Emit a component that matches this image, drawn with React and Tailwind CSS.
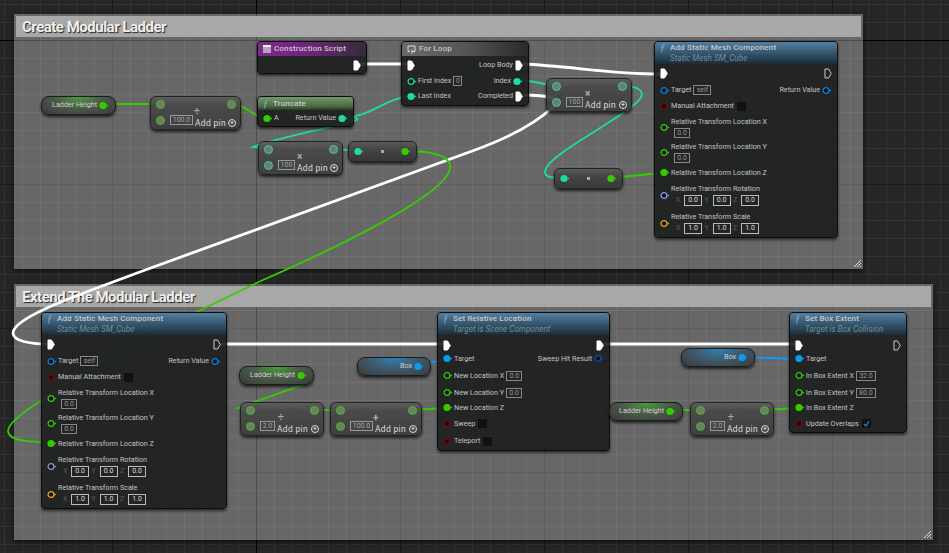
const GREEN = "#35cc00";
const TEAL = "#1ddba8";
const BLUE = "#0a9cf0";
const OBJ = "#0a7fd8";
const RED = "#7d0505";
const STRUCT = "#8898e0";
const AMBER = "#e0a814";

/* GRID */

function Grid() {
  const minorX = [];
  const minorY = [];
  for (let x = 4; x < 949; x += 18) minorX.push(x);
  for (let y = 4; y < 553; y += 18) minorY.push(y);
  return (
    <svg className="absolute inset-0" width="949" height="553">
      {minorX.map(x => (
        <line key={x} x1={x + 0.5} x2={x + 0.5} y1="0" y2="553" stroke="#333333" />
      ))}
      {minorY.map(y => (
        <line key={y} y1={y + 0.5} y2={y + 0.5} x1="0" x2="949" stroke="#333333" />
      ))}
      {[112, 400, 544, 688, 832].map(x => (
        <line key={x} x1={x + 0.5} x2={x + 0.5} y1="0" y2="553" stroke="#1a1a1a" />
      ))}
      {[184, 328, 472].map(y => (
        <line key={y} y1={y + 0.5} y2={y + 0.5} x1="0" x2="949" stroke="#1a1a1a" />
      ))}
      <line x1="256.5" x2="256.5" y1="0" y2="553" stroke="#000000" />
      <line y1="40.5" y2="40.5" x1="0" x2="949" stroke="#000000" />
    </svg>
  );
}

/* WIRES */

function Wires() {
  return (
    <svg className="absolute inset-0" width="949" height="553" fill="none" strokeLinecap="round">
      <g stroke="#ffffff" strokeWidth="2.8">
        <path d="M358 64 L410 64" />
        <path d="M522 64 C570 66 610 74 660 74" />
        <path d="M522 95 C548 95 564 98 553 107 C535 124 505 139 475 150 L137 273 C90 291 13 316 13 333 C13 341 30 344 47 344" />
        <path d="M222 344 L442 344" />
        <path d="M600 344 L796 344" />
      </g>
      <g stroke={GREEN} strokeWidth="1.8">
        <path d="M103 104 L160 104" />
        <path d="M232 104 C245 105 250 113 262 118" />
        <path d="M405 151 C430 151 450 155 450 167 C450 195 320 255 263 280 C200 310 110 352 42 400 C20 414 8 424 8 431 C8 440 25 442 47 442" />
        <path d="M612 178 L660 173" />
        <path d="M300 374 C312 374 316 378 310 382 L238 408 L249 410" />
        <path d="M314 410 L340 410" />
        <path d="M412 410 L447 408" />
        <path d="M669 410 L700 410" />
        <path d="M764 410 L798 408" />
      </g>
      <g stroke={TEAL} strokeWidth="1.8">
        <path d="M342 117 C370 119 385 97 412 96" />
        <path d="M342 117 C362 117 360 120 350 122 C320 130 270 140 253 147 L268 149" />
        <path d="M334 149 L358 151" />
        <path d="M518 79 L556 86" />
        <path d="M622 86 C640 86 645 92 640 99 C625 118 545 155 545 172 C545 178 555 178 564 178" />
      </g>
      <g stroke={BLUE} strokeWidth="1.8">
        <path d="M415 366 L447 359" />
        <path d="M741 357 L798 359" />
      </g>
    </svg>
  );
}

/* COMMENT */

function Comment({ className, title }) {
  return (
    <div className={`absolute bg-white/30 shadow-[0_2px_6px_rgba(0,0,0,0.6)] ${className}`}>
      <div className="mx-[2px] mt-[2px] h-[21px] bg-[#a8a8a8] pl-[6px] font-['Roboto'] text-[15px] font-bold leading-[22px] tracking-[-0.5px] text-[#efefef] [text-shadow:1px_1px_1px_#222]">
        {title}
      </div>
      <svg className="absolute bottom-[1px] right-[1px]" width="9" height="9" stroke="#dddddd">
        <path d="M1 8 L8 1 M4 8 L8 4 M7 8 L8 7" />
      </svg>
    </div>
  );
}

/* PINS */

function Pin({ color, filled }) {
  return (
    <svg className="shrink-0" width="10" height="9" viewBox="0 0 10 9">
      <circle cx="4" cy="4.5" r={filled ? 3.6 : 2.9} fill={filled ? color : "#111111"} stroke={color} strokeWidth={filled ? 0 : 1.3} />
      <path d="M7.5 3.2 L9.5 4.5 L7.5 5.8 Z" fill={color} />
    </svg>
  );
}

function Exec({ filled = true }) {
  return (
    <svg className="shrink-0" width="8" height="11" viewBox="0 0 8 11">
      <path d="M1 1 L4.5 1 L7.3 5.5 L4.5 10 L1 10 Z" fill={filled ? "#ffffff" : "none"} stroke={filled ? "#ffffff" : "#cccccc"} />
    </svg>
  );
}

function RingPin({ color }) {
  return <span className="block h-[9px] w-[9px] shrink-0 rounded-full border-[1.5px] bg-[#777777]" style={{ borderColor: color }} />;
}

/* SMALL PARTS */

function Val({ children, w }) {
  return (
    <span className={`ml-[1px] inline-block h-[10px] border border-[#888888] text-center text-[7px] leading-[8px] text-[#999999] ${w}`}>
      {children}
    </span>
  );
}

function Check({ on }) {
  return (
    <span className="ml-[2px] flex h-[9px] w-[9px] items-center justify-center bg-[#111111]">
      {on && (
        <svg width="7" height="7" viewBox="0 0 7 7" fill="none" stroke="#1e7fe0" strokeWidth="1.4">
          <path d="M1 4 L3 6 L6 1" />
        </svg>
      )}
    </span>
  );
}

function Vec({ values }) {
  return (
    <div className="mt-[1px] flex items-center pl-[5px] text-[7px] text-[#5c5c5c]">
      {["X", "Y", "Z"].map((axis, i) => (
        <span key={axis} className="flex w-[28.5px] items-center">
          <span className="w-[8px]">{axis}</span>
          <span className="inline-block h-[11px] w-[18px] border border-[#bbbbbb] text-center leading-[9px] text-[#dddddd]">{values[i]}</span>
        </span>
      ))}
    </div>
  );
}

/* ROW */

function Row({ h, pin, filled, children, right, rightPin, rightFilled, exec, execOut, execOutFilled = true }) {
  return (
    <div className={`flex items-center justify-between ${h}`}>
      <div className="flex items-center gap-[1px]">
        {exec && <Exec />}
        {pin && <Pin color={pin} filled={filled} />}
        {children}
      </div>
      {right && (
        <div className="flex items-center gap-[1px]">
          <span className="pr-[1px]">{right}</span>
          {rightPin && <Pin color={rightPin} filled={rightFilled} />}
          {execOut && <Exec filled={execOutFilled} />}
        </div>
      )}
      {!right && execOut && <Exec filled={execOutFilled} />}
    </div>
  );
}

/* FUNCTION NODE */

function Node({ className, icon = "f", title, sub, header, headerH, children, inner }) {
  return (
    <div className={`absolute overflow-hidden rounded-[4px] border border-[#0c0c0c] bg-[#1c1e1d]/90 font-['Roboto'] text-[7.2px] text-[#c4c4c4] shadow-[0_2px_3px_rgba(0,0,0,0.6)] ${className}`}>
      <div className={`flex flex-col justify-center pl-[5px] ${header} ${headerH}`}>
        <div className="flex items-center gap-[3px]">
          {icon === "f" && <span className="w-[7px] font-['Liberation_Serif'] text-[10px] italic leading-[10px] text-[#8fb4cd]">ƒ</span>}
          {icon === "script" && <span className="h-[8px] w-[8px] bg-[#b9a4bf] shadow-[inset_0_2px_0_#eee]" />}
          {icon === "loop" && (
            <svg width="9" height="9" viewBox="0 0 9 9" fill="none" stroke="#dddddd">
              <path d="M3 6.5 H1 V1 H8 V6.5 H5 M5 4.5 L5 8.5" />
            </svg>
          )}
          <span className="text-[8px] font-medium leading-[10px] tracking-[0.15px] text-[#c8c8c8]">{title}</span>
        </div>
        {sub && <span className="pl-[10px] text-[8.2px] italic leading-[10px] text-[#6f8d9c]">{sub}</span>}
      </div>
      <div className={inner}>{children}</div>
    </div>
  );
}

/* COMPACT NODES */

function MathNode({ className, symbol, symbolPos, value, color, boxW }) {
  return (
    <div className={`absolute rounded-[6px] border border-[#222222] bg-[linear-gradient(180deg,rgba(92,92,92,0.92)_0%,rgba(72,72,72,0.92)_25%,rgba(60,60,60,0.92)_100%)] pl-[5px] pr-[4px] pt-[3px] font-['Roboto'] shadow-[0_2px_3px_rgba(0,0,0,0.7)] ${className}`}>
      <div className="flex items-center justify-between">
        <RingPin color={color} />
        <RingPin color={color} />
      </div>
      <div className="mt-[6px] flex h-[10px] items-center">
        <RingPin color={color} />
        <span className={`ml-[5px] inline-block h-[10px] shrink-0 border border-[#999999] text-center text-[7px] leading-[8px] text-[#a5a5a5] ${boxW}`}>{value}</span>
        <span className="ml-[2px] mt-[6px] flex-1 whitespace-nowrap text-[8.5px] leading-[8px] tracking-[0.3px] text-[#dddddd]">Add pin</span>
        <span className="mt-[6px] flex h-[8px] w-[8px] shrink-0 items-center justify-center rounded-full border border-[#dddddd] text-[7px] leading-[6px] text-white">+</span>
      </div>
      <span className={`absolute top-[10px] text-[10px] font-bold leading-[10px] text-[#b0b0b0] ${symbolPos}`}>{symbol}</span>
    </div>
  );
}

function VarNode({ className, label, color, glow }) {
  return (
    <div className={`absolute flex items-center justify-end gap-[1px] rounded-[8px] border border-[#1c1c1c] pr-[6px] font-['Roboto'] text-[7.2px] text-[#d0d0d0] shadow-[0_2px_3px_rgba(0,0,0,0.7)] ${glow} ${className}`}>
      <span className="pr-[1px]">{label}</span>
      <Pin color={color} filled />
    </div>
  );
}

function DotNode({ className, from, to }) {
  return (
    <div className={`absolute flex items-center justify-between rounded-[6px] border border-[#222222] bg-[linear-gradient(180deg,#5a5a5a_0%,#444444_40%,#383838_100%)] px-[5px] shadow-[0_2px_3px_rgba(0,0,0,0.7)] ${className}`}>
      <Pin color={from} filled />
      <span className="h-[3px] w-[3px] bg-[#aaaaaa]" />
      <Pin color={to} filled />
    </div>
  );
}

const BLUE_HEAD = "bg-[linear-gradient(180deg,rgba(84,132,168,0.95)_0%,rgba(42,72,92,0.95)_70%,rgba(28,44,54,0.95)_100%)]";
const GREEN_GLOW = "bg-[radial-gradient(ellipse_at_50%_0%,#4a9a3a_0%,#4a5c48_45%,#3a3a3a_100%)]";
const BLUE_GLOW = "bg-[radial-gradient(ellipse_at_50%_0%,#2c80b8_0%,#3f5868_50%,#3a3a3a_100%)]";

function MeshNode({ className }) {
  return (
    <Node className={className} title="Add Static Mesh Component" sub="Static Mesh SM_Cube" header={BLUE_HEAD} headerH="h-[22px]" inner="px-[5px]">
      <Row h="h-[19px]" exec execOut execOutFilled={false} />
      <Row h="h-[15px]" pin={OBJ} right="Return Value" rightPin={OBJ}>
        Target <Val w="w-[18px]">self</Val>
      </Row>
      <Row h="h-[17px]" pin={RED}>
        Manual Attachment <Check />
      </Row>
      <Row h="h-[25px]" pin={GREEN}>
        <div className="flex flex-col items-start">
          <span className="leading-[10px]">Relative Transform Location X</span>
          <span className="ml-[2px] mt-[1px] flex"><Val w="w-[16px]">0.0</Val></span>
        </div>
      </Row>
      <Row h="h-[25px]" pin={GREEN}>
        <div className="flex flex-col items-start">
          <span className="leading-[10px]">Relative Transform Location Y</span>
          <span className="ml-[2px] mt-[1px] flex"><Val w="w-[16px]">0.0</Val></span>
        </div>
      </Row>
      <Row h="h-[16px]" pin={GREEN} filled>
        Relative Transform Location Z
      </Row>
      <Row h="h-[28px]" pin={STRUCT}>
        <div>
          <span className="block leading-[10px]">Relative Transform Rotation</span>
          <Vec values={["0.0", "0.0", "0.0"]} />
        </div>
      </Row>
      <Row h="h-[28px]" pin={AMBER}>
        <div>
          <span className="block leading-[10px]">Relative Transform Scale</span>
          <Vec values={["1.0", "1.0", "1.0"]} />
        </div>
      </Row>
    </Node>
  );
}

export default function App() {
  return (
    <div className="relative h-[553px] w-[949px] overflow-hidden bg-[#262626]">
      <Grid />

      <Comment className="left-[14px] top-[14px] h-[255px] w-[849px]" title="Create Modular Ladder" />
      <Comment className="left-[14px] top-[284px] h-[256px] w-[919px]" title="Extend The Modular Ladder" />

      <Wires />

      {/* CONSTRUCTION */}

      <Node className="left-[257px] top-[41px] h-[33px] w-[110px]" icon="script" title="Construction Script" header="bg-[linear-gradient(90deg,#7e2a8c_0%,#70247e_45%,#342a3a_100%)]" headerH="h-[14px]" inner="flex h-[18px] items-center justify-end pr-[5px]">
        <Exec />
      </Node>

      <Node className="left-[401px] top-[41px] h-[65px] w-[128px]" icon="loop" title="For Loop" header="bg-[linear-gradient(90deg,#6a6a6a_0%,#555555_50%,#2a2a2a_100%)]" headerH="h-[14px]" inner="px-[5px]">
        <Row h="h-[18px]" exec right="Loop Body" execOut />
        <Row h="h-[15px]" pin={TEAL} right="Index" rightPin={TEAL} rightFilled>
          First Index <Val w="w-[9px]">0</Val>
        </Row>
        <Row h="h-[15px]" pin={TEAL} filled right="Completed" execOut>
          Last Index
        </Row>
      </Node>

      <VarNode className="left-[41px] top-[96px] h-[19px] w-[75px]" label="Ladder Height" color={GREEN} glow={GREEN_GLOW} />
      <MathNode className="left-[150px] top-[96px] h-[34px] w-[91px]" symbol="÷" symbolPos="left-[43px]" value="100.0" color={GREEN} boxW="w-[23px]" />

      <Node className="left-[257px] top-[96px] h-[31px] w-[97px]" title="Truncate" header="bg-[linear-gradient(180deg,#6f9a66_0%,#4d6a48_70%,#2c3a2a_100%)]" headerH="h-[13px]" inner="flex h-[17px] items-center justify-between px-[5px]">
        <div className="flex items-center gap-[1px]"><Pin color={GREEN} filled /> A</div>
        <div className="flex items-center gap-[1px]"><span className="pr-[1px]">Return Value</span> <Pin color={TEAL} filled /></div>
      </Node>

      <MathNode className="left-[258px] top-[141px] h-[34px] w-[85px]" symbol="×" symbolPos="left-[38px]" value="100" color={TEAL} boxW="w-[17px]" />
      <DotNode className="left-[348px] top-[141px] h-[21px] w-[69px]" from={TEAL} to={GREEN} />
      <MathNode className="left-[546px] top-[78px] h-[34px] w-[86px]" symbol="×" symbolPos="left-[38px]" value="100" color={TEAL} boxW="w-[17px]" />
      <DotNode className="left-[554px] top-[168px] h-[21px] w-[69px]" from={TEAL} to={GREEN} />

      <MeshNode className="left-[654px] top-[41px] h-[197px] w-[184px]" />

      {/* EXTEND */}

      <MeshNode className="left-[41px] top-[312px] h-[197px] w-[186px]" />

      <VarNode className="left-[239px] top-[366px] h-[19px] w-[75px]" label="Ladder Height" color={GREEN} glow={GREEN_GLOW} />
      <MathNode className="left-[240px] top-[402px] h-[34px] w-[84px]" symbol="÷" symbolPos="left-[37px]" value="2.0" color={GREEN} boxW="w-[15px]" />
      <MathNode className="left-[330px] top-[402px] h-[34px] w-[92px]" symbol="+" symbolPos="left-[42px]" value="100.0" color={GREEN} boxW="w-[23px]" />
      <VarNode className="left-[357px] top-[357px] h-[19px] w-[74px]" label="Box" color={BLUE} glow={BLUE_GLOW} />

      <Node className="left-[437px] top-[312px] h-[139px] w-[173px]" title="Set Relative Location" sub="Target is Scene Component" header={BLUE_HEAD} headerH="h-[22px]" inner="px-[5px] pt-[2px]">
        <Row h="h-[16px]" exec execOut />
        <Row h="h-[12px]" pin={BLUE} filled right="Sweep Hit Result" rightPin="#0a50b0">Target</Row>
        <Row h="h-[22px]" pin={GREEN}>New Location X <Val w="w-[16px]">0.0</Val></Row>
        <Row h="h-[12px]" pin={GREEN}>New Location Y <Val w="w-[16px]">0.0</Val></Row>
        <Row h="h-[18px]" pin={GREEN} filled>New Location Z</Row>
        <Row h="h-[14px]" pin={RED}>Sweep <Check /></Row>
        <Row h="h-[21px]" pin={RED}>Teleport <Check /></Row>
      </Node>

      <VarNode className="left-[681px] top-[348px] h-[19px] w-[74px]" label="Box" color={BLUE} glow={BLUE_GLOW} />
      <VarNode className="left-[609px] top-[402px] h-[19px] w-[74px]" label="Ladder Height" color={GREEN} glow={GREEN_GLOW} />
      <MathNode className="left-[690px] top-[402px] h-[34px] w-[84px]" symbol="÷" symbolPos="left-[37px]" value="2.0" color={GREEN} boxW="w-[15px]" />

      <Node className="left-[789px] top-[312px] h-[121px] w-[118px]" title="Set Box Extent" sub="Target is Box Collision" header={BLUE_HEAD} headerH="h-[22px]" inner="px-[5px] pt-[2px]">
        <Row h="h-[16px]" exec execOut execOutFilled={false} />
        <Row h="h-[12px]" pin={BLUE} filled>Target</Row>
        <Row h="h-[22px]" pin={GREEN}>In Box Extent X <Val w="w-[20px]">32.0</Val></Row>
        <Row h="h-[12px]" pin={GREEN}>In Box Extent Y <Val w="w-[20px]">80.0</Val></Row>
        <Row h="h-[18px]" pin={GREEN} filled>In Box Extent Z</Row>
        <Row h="h-[14px]" pin={RED}>Update Overlaps <Check on /></Row>
      </Node>
    </div>
  );
}
